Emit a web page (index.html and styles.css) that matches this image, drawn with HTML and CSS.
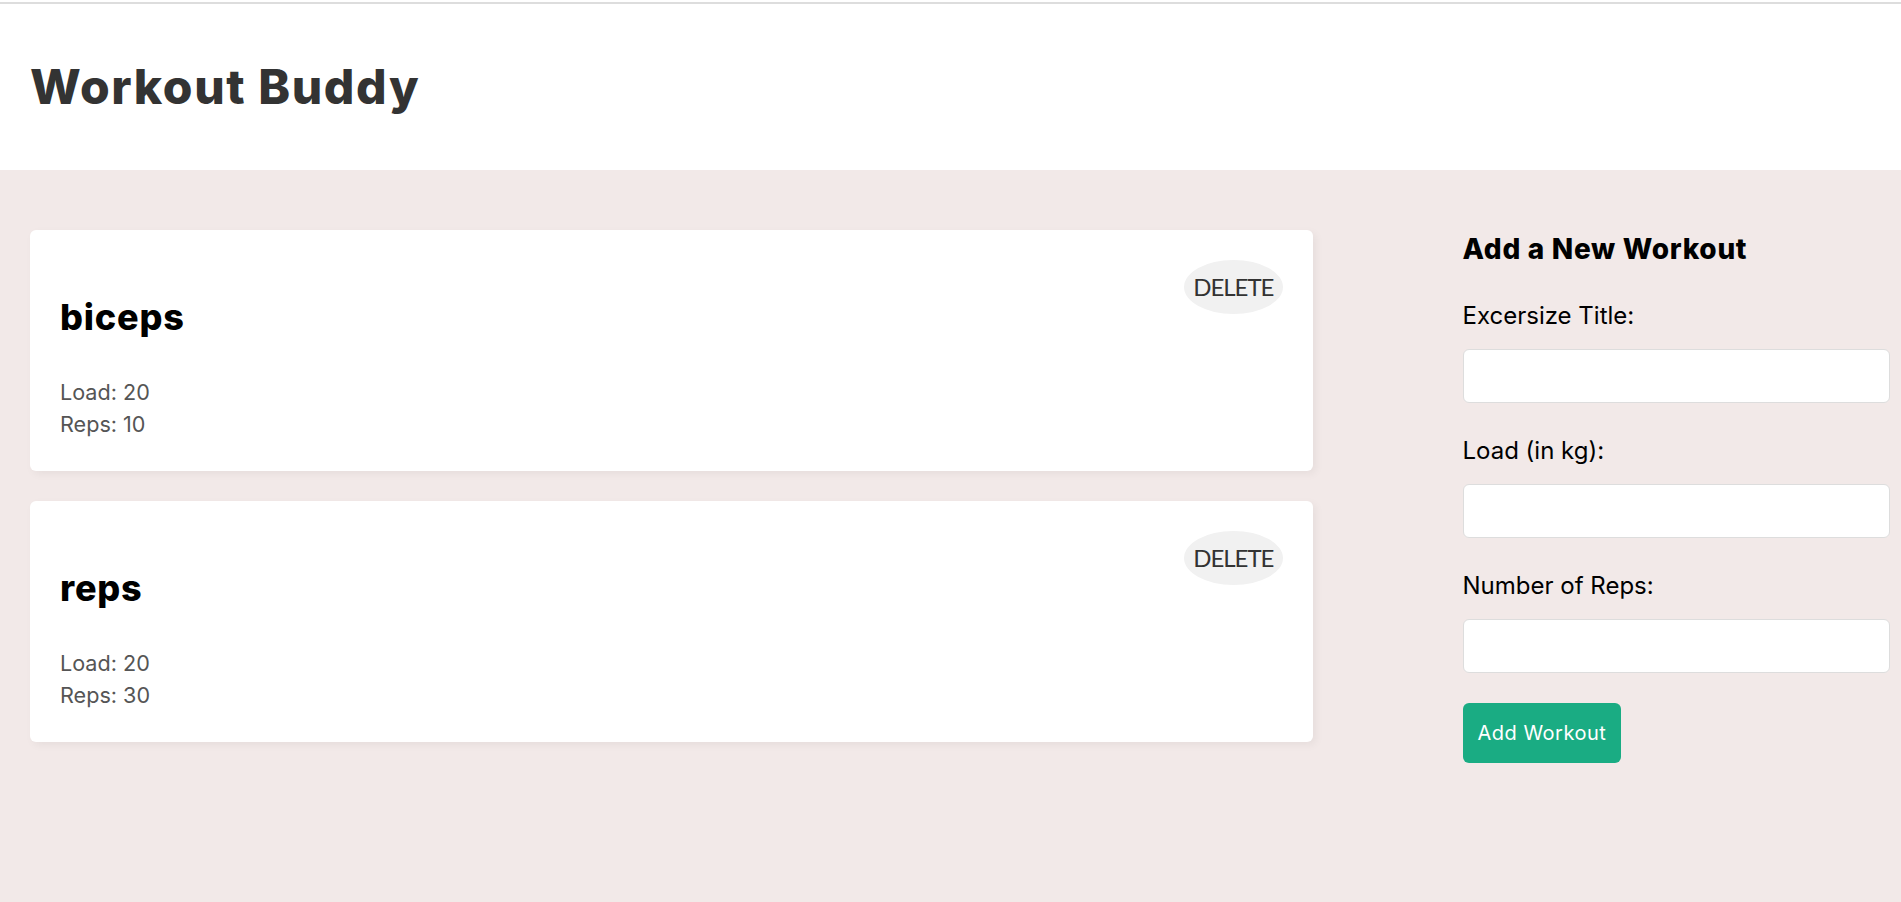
FILE: index.html
```html
<!DOCTYPE html>
<html lang="en">
<head>
<meta charset="utf-8">
<title>Workout Buddy</title>
<link rel="stylesheet" href="styles.css">
</head>
<body>
<div class="topline"></div>
<header class="header">
  <div class="header-inner">
    <h1 class="brand">Workout Buddy</h1>
  </div>
</header>
<main class="pages">
  <div class="home">
    <div class="workouts">
      <div class="workout-card">
        <div class="workout-info">
          <h2 class="workout-title">biceps</h2>
          <p class="workout-stat">Load: 20</p>
          <p class="workout-stat">Reps: 10</p>
        </div>
        <span class="delete-btn">DELETE</span>
      </div>
      <div class="workout-card">
        <div class="workout-info">
          <h2 class="workout-title">reps</h2>
          <p class="workout-stat">Load: 20</p>
          <p class="workout-stat">Reps: 30</p>
        </div>
        <span class="delete-btn">DELETE</span>
      </div>
    </div>
    <form class="create-form">
      <h3 class="form-title">Add a New Workout</h3>
      <label class="field-label">Excersize Title:</label>
      <input class="field-input" type="text">
      <label class="field-label">Load (in kg):</label>
      <input class="field-input" type="number">
      <label class="field-label">Number of Reps:</label>
      <input class="field-input" type="number">
      <button class="submit-btn" type="button">Add Workout</button>
    </form>
  </div>
</main>
</body>
</html>
```
FILE: styles.css
```css
html, body {
  margin: 0;
  padding: 0;
}
body {
  background: #f2e9e8;
  font-family: Inter, "Open Sans", sans-serif;
  min-height: 100vh;
}
.topline {
  height: 2px;
  margin-top: 0;
  border-top: 2px solid #ffffff;
  background: #dddddd;
}
.header {
  background: #ffffff;
}
.header-inner {
  padding: 15px 30px;
  display: flex;
  align-items: center;
}
.brand {
  margin: 32px 0;
  font-size: 48px;
  line-height: 72px;
  font-weight: 800;
  color: #333333;
  letter-spacing: 1.6px;
}
.pages {
  padding: 30px 11px 30px 30px;
}
.home {
  display: grid;
  grid-template-columns: 3fr 1fr;
  gap: 150px;
}
.workouts {
  display: flex;
  flex-direction: column;
  gap: 30px;
  padding-top: 30px;
}
.workout-card {
  background: #ffffff;
  border-radius: 6px;
  padding: 30px;
  display: flex;
  justify-content: space-between;
  align-items: flex-start;
  box-shadow: 3px 3px 8px rgba(0, 0, 0, 0.05);
}
.workout-title {
  margin: 30px 0 32px;
  font-size: 36px;
  line-height: 54px;
  font-weight: 800;
  color: #000000;
  letter-spacing: 0.8px;
}
.workout-stat {
  margin: 0;
  font-size: 21.6px;
  line-height: 32.4px;
  color: #555555;
}
.delete-btn {
  background: #f1f1f1;
  border-radius: 50%;
  padding: 9px;
  font-family: Lato, "Open Sans", sans-serif;
  font-size: 24px;
  line-height: 36px;
  letter-spacing: -1px;
  color: #333333;
  cursor: pointer;
}
.create-form {
  display: flex;
  flex-direction: column;
  align-items: flex-start;
}
.form-title {
  margin: 28px 0;
  font-size: 28px;
  line-height: 42px;
  font-weight: 800;
  color: #000000;
  letter-spacing: 0.7px;
}
.field-label {
  font-size: 24px;
  line-height: 36px;
  color: #000000;
}
.field-input {
  margin: 15px 0 30px;
  width: 100%;
  height: 54px;
  box-sizing: border-box;
  padding: 15px;
  border: 1px solid #dddddd;
  border-radius: 6px;
  background: #ffffff;
  font-size: 20px;
}
.submit-btn {
  background: #1aac83;
  border: 0;
  color: #ffffff;
  padding: 15px;
  font-family: Inter, "Open Sans", sans-serif;
  font-size: 20px;
  line-height: 30px;
  letter-spacing: 0.5px;
  border-radius: 6px;
  cursor: pointer;
}
```
